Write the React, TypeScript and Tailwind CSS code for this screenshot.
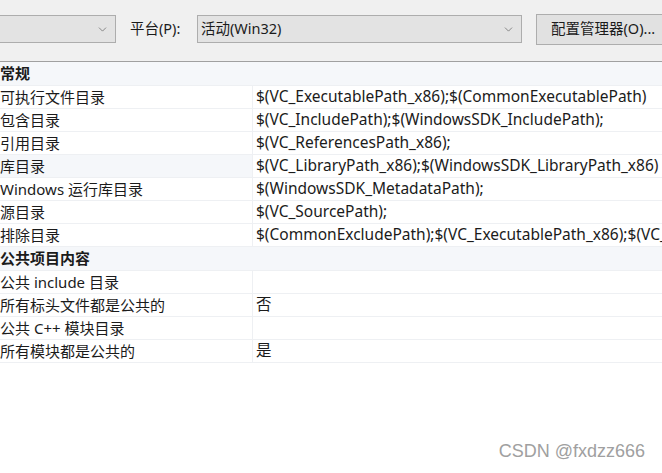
import { ChevronDown } from "lucide-react";

type Row = { name: string; value: string; header?: boolean; tint?: boolean };

const rows: Row[] = [
  { name: "常规", value: "", header: true },
  { name: "可执行文件目录", value: "$(VC_ExecutablePath_x86);$(CommonExecutablePath)" },
  { name: "包含目录", value: "$(VC_IncludePath);$(WindowsSDK_IncludePath);" },
  { name: "引用目录", value: "$(VC_ReferencesPath_x86);" },
  { name: "库目录", value: "$(VC_LibraryPath_x86);$(WindowsSDK_LibraryPath_x86)", tint: true },
  { name: "Windows 运行库目录", value: "$(WindowsSDK_MetadataPath);" },
  { name: "源目录", value: "$(VC_SourcePath);" },
  { name: "排除目录", value: "$(CommonExcludePath);$(VC_ExecutablePath_x86);$(VC_LibraryPath_x86)" },
  { name: "公共项目内容", value: "", header: true },
  { name: "公共 include 目录", value: "" },
  { name: "所有标头文件都是公共的", value: "否" },
  { name: "公共 C++ 模块目录", value: "" },
  { name: "所有模块都是公共的", value: "是" },
];

export default function App() {
  return (
    <div
      className="w-[662px] h-[473px] overflow-hidden bg-white text-[#1b1b1b] relative"
      style={{ fontFamily: '"Noto Sans", "Noto Sans CJK SC", sans-serif' }}
    >
      {/* toolbar */}
      <div className="h-[61px] bg-[#f0f0f0] flex items-center text-[14.5px] whitespace-nowrap relative">
        <div className="ml-[-20px] shrink-0 w-[136px] h-[28px] mt-[-3px] border border-[#adadad] bg-[#e3e3e3] flex items-center justify-end pr-[6px]">
          <ChevronDown size={13} strokeWidth={1.2} className="text-[#555]" />
        </div>
        <span className="ml-[14px] shrink-0 mt-[-3px]">平台(P):</span>
        <div className="ml-auto shrink-0 w-[325px] h-[28px] mt-[-3px] border border-[#adadad] bg-[#e3e3e3] flex items-center justify-between pl-[3px] pr-[6px]">
          <span>活动(Win32)</span>
          <ChevronDown size={13} strokeWidth={1.2} className="text-[#555]" />
        </div>
        <div className="ml-[14px] mr-[-14px] shrink-0 w-[140px] h-[31px] mt-[-3px] border border-[#adadad] bg-[#e1e1e1] flex items-center pl-[14px]">
          配置管理器(O)...
        </div>
      </div>
      <div className="h-px bg-[#a0a0a0]" />

      {/* property grid */}
      <div className="text-[15px]">
        {rows.map((r, i) =>
          r.header ? (
            <div
              key={i}
              className="h-[24px] bg-[#f5f7fa] border-b border-[#eef0f3] flex items-center font-bold whitespace-nowrap"
            >
              {r.name}
            </div>
          ) : (
            <div key={i} className="h-[23px] flex border-b border-[#eef0f3] whitespace-nowrap">
              <div
                className={`w-[253px] shrink-0 border-r border-[#eef0f3] flex items-center ${
                  r.tint ? "bg-[#f5f7fa]" : "bg-white"
                }`}
              >
                {r.name}
              </div>
              <div className="flex-1 min-w-0 flex items-center pl-[3px] bg-white overflow-hidden text-[15.5px]">
                {r.value}
              </div>
            </div>
          )
        )}
      </div>

      <div
        className="absolute right-[17px] bottom-[8px] text-[18px] text-[#a0a0a0]"
        style={{ fontFamily: '"Liberation Sans", Arial, sans-serif' }}
      >
        CSDN @fxdzz666
      </div>
    </div>
  );
}
